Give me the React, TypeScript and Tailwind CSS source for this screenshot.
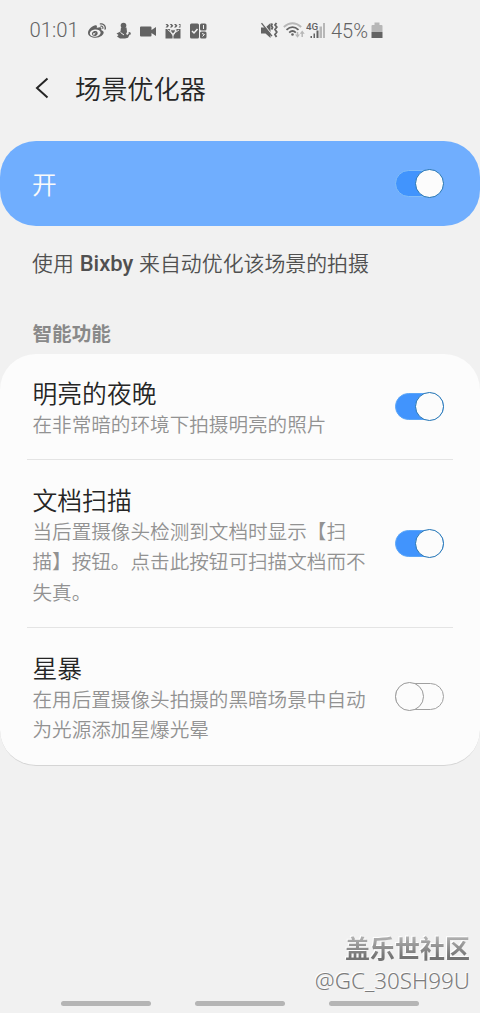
import React, { useState } from 'react';
import { FaWeibo } from 'react-icons/fa';

const features = [
  {
    title: '明亮的夜晚',
    lines: ['在非常暗的环境下拍摄明亮的照片'],
    enabled: true,
  },
  {
    title: '文档扫描',
    lines: ['当后置摄像头检测到文档时显示【扫', '描】按钮。点击此按钮可扫描文档而不', '失真。'],
    enabled: true,
  },
  {
    title: '星暴',
    lines: ['在用后置摄像头拍摄的黑暗场景中自动', '为光源添加星爆光晕'],
    enabled: false,
  },
];

type ToggleProps = {
  on: boolean;
  onChange: () => void;
  outlined?: boolean;
};

const Toggle: React.FC<ToggleProps> = ({ on, onChange, outlined }) => {
  const track = on
    ? outlined
      ? 'border-[#82bdf8] bg-[#4194fd]'
      : 'border-[#5ba6f8] bg-[#4194fd]'
    : 'border-[#a0a0a0] bg-[#fcfcfc]';
  return (
    <button
      role="switch"
      aria-checked={on}
      onClick={onChange}
      className="relative flex h-[29px] w-[49px] shrink-0 items-center"
    >
      <span className={`h-[27px] w-full rounded-full border ${track}`} />
      <span
        className={`absolute top-0 size-[29px] rounded-full border bg-[#fcfcfc] ${
          on ? 'right-0 border-[#1f72b4]' : 'left-0 border-[#999999]'
        }`}
      />
    </button>
  );
};

const StatusBar = () => (
  <div className="flex h-[61px] items-center pl-[29.500px] text-[#636363]">
    <span className="w-[58.500px] font-[Roboto,sans-serif] text-[20.300px] font-[350]">01:01</span>
    <FaWeibo className="size-[18px]" />

    {/* Seated figure */}
    <svg className="ml-[10px]" width="15" height="17" viewBox="0 0 15 17" fill="currentColor">
      <circle cx="7.5" cy="3.6" r="2.8" />
      <path d="M5 5.500h5.500l.5 4.500-1 2 1.500 1 1.500-2-.7-1 2 .2.700 2-1.500.5-1.500 3-3 .8H4L1 14.500l1.500-1.500L.5 11.500l4-2z" />
      <path d="M4.500 10.500l3.500 2.500" stroke="#f1f1f1" />
    </svg>

    {/* Camcorder */}
    <svg className="ml-[9px]" width="16" height="12" viewBox="0 0 16 12" fill="currentColor">
      <path d="M1 1.500h9.500a1 1 0 0 1 1 1V5L16 2v9l-4.500-3v2.500a1 1 0 0 1-1 1H1a1 1 0 0 1-1-1v-8a1 1 0 0 1 1-1z" />
    </svg>

    {/* Clapperboard with a heart */}
    <svg className="ml-[9px]" width="16" height="16" viewBox="0 0 16 16" fill="currentColor">
      <path d="M.5 1h2L4 2.800 2.500 4.500h-2L2 2.800zM4.800 1h2l1.500 1.800-1.500 1.700h-2l1.500-1.700zM9 1h2l1.500 1.800L11 4.500H9l1.500-1.700zM13.500 1h2v3.500h-2L15 2.800z" />
      <path d="M.5 6h15v9.500H.5z" />
      <path d="M8 12.500L5.300 8.600Q4.800 6 6.500 5.500q1 0 1.500 1 .5-1 2-1 1.700.8 1 3zM8 12v4M2.500 6.500l3 2.500M11 9l3-2" fill="#f1f1f1" stroke="#f1f1f1" strokeWidth=".9" />
      <path d="M8 10.500L6.300 8.500V6.800L8 7.500l1.700-.7v1.700z" />
    </svg>

    {/* Tile widget */}
    <svg className="ml-[9px]" width="17" height="16" viewBox="0 0 17 16" fill="currentColor">
      <rect x="0" y="0.500" width="9" height="15" rx="1.500" />
      <rect x="10" y="0.500" width="6.500" height="7" rx="1.500" />
      <rect x="10" y="8.500" width="6.500" height="7" rx="1.500" />
      <path d="M2 8l2 2 3.500-4" fill="none" stroke="#f1f1f1" strokeWidth="1.500" />
      <path d="M13.500 2v4M12 10.500l2.500 1-2 2" fill="none" stroke="#f1f1f1" />
    </svg>

    {/* Muted speaker */}
    <svg className="ml-[54px]" width="18" height="17" viewBox="0 0 18 17" fill="currentColor">
      <path d="M0 5.500h4.500L9.500 1v15l-5-4.500H0z" />
      <path d="M1.500.8l10 12.500" stroke="#f1f1f1" strokeWidth="1.200" />
      <path d="M.5 1.200l10.500 13" stroke="currentColor" strokeWidth="1.300" />
      <path d="M11.300 1.500l-1 2 1.200 2-1 2M15.500 1l-1.500 2 1.800 2-1.800 2.500 1.800 2.500-1.800 2.500 1.500 2.500" fill="none" stroke="currentColor" strokeWidth="1.800" />
    </svg>

    {/* Wi-Fi */}
    <svg className="ml-[4px]" width="22" height="17" viewBox="0 0 22 17" fill="none" strokeWidth="1.800">
      <path d="M.8 5Q9.500-2.500 18.200 5" stroke="#b7b7b7" />
      <path d="M3.500 7.800Q9.500 2.500 15.500 7.800M6.200 10.600Q9.500 7.500 12.800 10.600" stroke="currentColor" />
      <circle cx="9.500" cy="12.500" r="1.300" fill="currentColor" />
      <path d="M14.500 10v4M19.200 15v-4" stroke="#b7b7b7" strokeWidth="1.500" />
      <path d="M12 12.500h5l-2.500 3.300zM16.700 11.800h5l-2.500-3.300z" fill="#b7b7b7" />
    </svg>

    {/* Mobile signal */}
    <svg className="ml-px" width="20" height="17" viewBox="0 0 20 17" fill="currentColor">
      <path d="M13.500 4.500H16V16h-2.500zM17 1h2v15h-2z" fill="#b7b7b7" />
      <path d="M4.500 14h1.500v2H4.500zM7.500 11.500H9V16H7.500zM10.500 8.500h2V16h-2z" />
      <text x="0" y="7.500" fontFamily="Roboto, sans-serif" fontSize="9.800" fontWeight="500">4G</text>
    </svg>

    <span className="ml-[5px] w-[40px] font-[Roboto,sans-serif] text-[20px] font-[350]">45%</span>

    {/* Battery */}
    <svg width="12" height="17" viewBox="0 0 12 17">
      <path d="M3.500.5h5V3h2a1 1 0 0 1 1 1v6H.5V4a1 1 0 0 1 1-1h2z" fill="#b7b7b7" />
      <path d="M.5 10h11v6H.5z" fill="#636363" />
    </svg>
  </div>
);

export default function App() {
  const [master, setMaster] = useState(true);
  const [enabled, setEnabled] = useState(features.map((f) => f.enabled));

  const toggle = (index: number) =>
    setEnabled(enabled.map((value, i) => (i === index ? !value : value)));

  return (
    <div className="flex h-[1013px] w-[480px] flex-col overflow-hidden bg-[#f1f1f1] font-['Noto_Sans_CJK_SC',sans-serif] font-[350]">
      <StatusBar />

      <header className="flex h-[54px] items-center pl-[34px]">
        <svg width="16" height="22" viewBox="0 0 16 22" fill="none" stroke="#252525" strokeWidth="2">
          <path d="M13.500 1.500L3 11l10.500 9.500" />
        </svg>
        <h1 className="ml-[25px] text-[26.2px] leading-[38px] text-[#252525]">场景优化器</h1>
      </header>

      <div className="mt-[26px] flex h-[85px] items-center justify-between rounded-[36px] bg-[#70aefe] pr-9 pl-8">
        <span className="mb-0.5 text-[24.7px] leading-9 text-[#fafafa]">开</span>
        <Toggle on={master} onChange={() => setMaster(!master)} outlined />
      </div>

      <p className="mt-5 pl-8 text-[20.900px] leading-8 text-[#505050] [word-spacing:1.200px]">
        使用 <span className="font-[Roboto,sans-serif] text-[22px] leading-none font-medium">Bixby</span> 来自动优化该场景的拍摄
      </p>

      <h2 className="mt-[39px] pl-[32.500px] text-[19.600px] leading-8 font-bold text-[#898989]">智能功能</h2>

      <section className="mt-[5px] h-[412px] shrink-0 rounded-[36px] border-b border-[#d5d5d5] bg-[#fcfcfc] px-[27px]">
        {features.map((feature, i) => (
          <div
            key={feature.title}
            className="flex items-center justify-between border-b border-[#e4e4e4] pt-[22.500px] pr-[9px] pb-5 pl-[5.500px] first:pt-[22px] first:pb-[19.500px] last:border-b-0"
          >
            <div className="whitespace-nowrap">
              <h3 className="text-[24.800px] leading-[33px] text-[#252525]">{feature.title}</h3>
              {feature.lines.map((line) => (
                <p key={line} className="text-[19.600px] leading-[30.500px] text-[#929292]">{line}</p>
              ))}
            </div>
            <div className="mb-0.5">
              <Toggle on={enabled[i]} onChange={() => toggle(i)} />
            </div>
          </div>
        ))}
      </section>

      <footer className="mt-auto flex flex-col">
        <div className="flex flex-col items-end pr-[10px]">
          <span className="bg-linear-to-b from-[#b0b0b0] from-20% to-[#747474] to-80% bg-clip-text text-[25px] leading-8 font-bold text-transparent drop-shadow-[-1px_-1px_0_#fff]">
            盖乐世社区
          </span>
          <span className="mt-0.5 font-['Noto_Sans',sans-serif] text-[22.400px] leading-8 text-[#7c7c7c] [text-shadow:-1px_-1px_0_#fff]">
            @GC_30SH99U
          </span>
        </div>
        <div className="flex h-[16px] items-start justify-center gap-11 pt-1">
          <span className="h-[5px] w-[90px] rounded-full bg-[#b5b5b5]" />
          <span className="h-[5px] w-[90px] rounded-full bg-[#b5b5b5]" />
          <span className="h-[5px] w-[90px] rounded-full bg-[#b5b5b5]" />
        </div>
      </footer>
    </div>
  );
}
